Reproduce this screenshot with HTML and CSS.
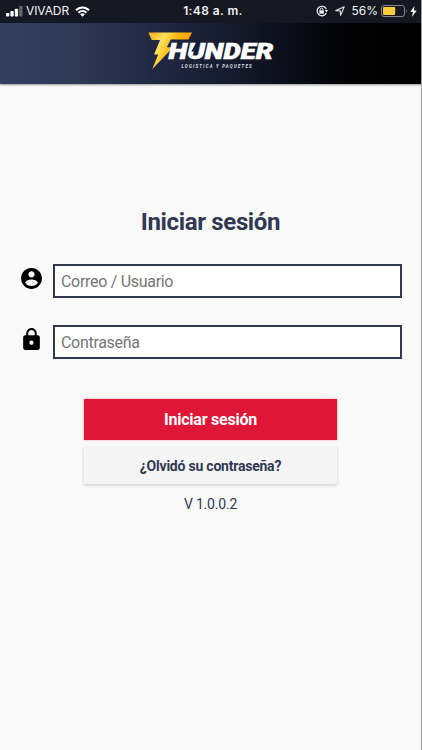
FILE: index.html
```html
<!DOCTYPE html>
<html lang="es">
<head>
<meta charset="utf-8">
<title>Thunder</title>
<link rel="stylesheet" href="styles.css">
</head>
<body>
<div class="screen">
  <div class="status">
    <div class="status-left">
      <svg class="signal" width="17" height="11" viewBox="0 0 17 11" fill="#fff">
        <rect x="0" y="7" width="3.3" height="3.6" rx=".8"/>
        <rect x="4.4" y="5" width="3.3" height="5.6" rx=".8"/>
        <rect x="8.8" y="2.7" width="3.3" height="7.9" rx=".8"/>
        <rect x="13.2" y="0" width="3.3" height="10.6" rx=".8" fill="#686a72"/>
      </svg>
      <span class="carrier">VIVADR</span>
      <svg class="wifi" width="15" height="11" viewBox="0 0 15 11" fill="none" stroke="#fff" stroke-width="2">
        <path d="M1 4.3C4.7.4 10.3.4 14 4.3"/>
        <path d="M3.5 6.8c2.3-2.4 5.7-2.4 8 0"/>
        <path d="M5.2 8.3q2.3-1.9 4.6 0L7.5 10.7z" fill="#fff" stroke="none"/>
      </svg>
    </div>
    <div class="clock">1:48 a. m.</div>
    <div class="status-right">
      <svg width="12" height="12" viewBox="0 0 12 12">
        <path d="M10.300 8A4.800 4.800 0 1 1 10.300 4.100" fill="none" stroke="#f2f2f4" stroke-width="1.200"/>
        <path d="M8.700 5.100h3.300l-1.500 2.500z" fill="#f2f2f4"/>
        <path d="M3.300 5.400h4.600v3.300H3.300z" fill="#f2f2f4"/>
        <path d="M4.300 5.600V4.400a1.300 1.300 0 0 1 2.600 0v1.200" fill="none" stroke="#f2f2f4"/>
      </svg>
      <svg width="10" height="10" viewBox="0 0 10 10">
        <path d="M9.200.8 5.600 9.200 5.200 4.900.8 4.600z" fill="none" stroke="#d6d7da" stroke-width="1.200" stroke-linejoin="round"/>
      </svg>
      <span class="percent">56%</span>
      <svg class="battery" width="27" height="12" viewBox="0 0 27 12">
        <rect x=".5" y=".5" width="23" height="11" rx="2.500" fill="none" stroke="#85878d"/>
        <rect x="2" y="2" width="12.200" height="8" rx="1" fill="#fbcb3c"/>
        <path d="M25 4q1.600 2 0 4z" fill="#85878d"/>
      </svg>
      <svg class="charge" width="7" height="11" viewBox="0 0 7 11"><path d="M4.500 0 .2 6h2.700L2 11l4.700-6.500H3.800z" fill="#fff"/></svg>
    </div>
  </div>
  <header class="header">
    <svg class="logo" width="128" height="41" viewBox="0 0 128 41">
      <defs>
        <linearGradient id="gold" x1="0" y1="0" x2="1" y2=".4">
          <stop offset="0" stop-color="#f5a30b"/>
          <stop offset=".35" stop-color="#ffe05a"/>
          <stop offset=".6" stop-color="#fbb80d"/>
          <stop offset="1" stop-color="#f2960d"/>
        </linearGradient>
      </defs>
      <path d="M.5 3.400H44L40.500 10.600H22.800L18.800 18.300H25.300L4.300 40 10.200 25.400H6.100L12.200 11H4z" fill="url(#gold)"/>
      <path d="M4 11 1.200 4.500 12.700 10.400 7 24.400" fill="none" stroke="#fff099" stroke-width=".6" opacity=".65"/>
      <text class="wordmark" x="20.500" y="30.400" textLength="104.500" lengthAdjust="spacingAndGlyphs">HUNDER</text>
      <path d="M51 14 46.500 21H49.800L44.500 27.500 46 22.500H43.300L48 14z" fill="#171d30"/>
      <text class="tagline" transform="translate(33.500 38.500) scale(.7 1)" textLength="100" lengthAdjust="spacing">LOGISTICA Y PAQUETES</text>
    </svg>
  </header>
  <main class="login">
    <h1 class="title">Iniciar sesión</h1>
    <form class="form">
      <label class="field">
        <svg class="field-icon" width="25" height="25" viewBox="0 0 24 24"><path d="M12 2C6.480 2 2 6.480 2 12s4.480 10 10 10 10-4.480 10-10S17.520 2 12 2zm0 3c1.660 0 3 1.340 3 3s-1.340 3-3 3-3-1.340-3-3 1.340-3 3-3zm0 14.200c-2.500 0-4.710-1.280-6-3.220.030-1.990 4-3.080 6-3.080 1.990 0 5.970 1.090 6 3.080-1.290 1.940-3.500 3.220-6 3.220z"/></svg>
        <input class="input" type="text" placeholder="Correo / Usuario">
      </label>
      <label class="field">
        <svg class="field-icon" width="25" height="25" viewBox="0 0 24 24"><path d="M18 8h-1V6c0-2.760-2.240-5-5-5S7 3.240 7 6v2H6c-1.100 0-2 .9-2 2v10c0 1.100.9 2 2 2h12c1.100 0 2-.9 2-2V10c0-1.100-.9-2-2-2zm-6 9c-1.100 0-2-.9-2-2s.9-2 2-2 2 .9 2 2-.9 2-2 2zm3.100-9H8.900V6c0-1.710 1.390-3.100 3.100-3.100s3.100 1.390 3.100 3.100v2z"/></svg>
        <input class="input" type="password" placeholder="Contraseña">
      </label>
      <button class="button primary" type="button">Iniciar sesión</button>
      <button class="button secondary" type="button">¿Olvidó su contraseña?</button>
    </form>
    <p class="version">V 1.0.0.2</p>
  </main>
</div>
</body>
</html>
```
FILE: styles.css
```css
* { box-sizing: border-box; }

body {
  margin: 0;
  font-family: Roboto, "Liberation Sans", sans-serif;
  background: #f9f9f9;
}

.screen {
  height: 750px;
  display: flex;
  flex-direction: column;
  border-right: 1px solid #9b9b9d;
  overflow: hidden;
}

.status {
  height: 23px;
  flex: none;
  display: grid;
  grid-template-columns: 1fr auto 1fr;
  align-items: center;
  margin-right: -1px;
  padding: 0 5px 1px 6px;
  background: #151721;
  color: #f2f2f4;
  font-family: Inter, "Liberation Sans", sans-serif;
  line-height: 20px;
}

.status-left, .status-right { display: flex; align-items: center; }
.status-right { justify-content: flex-end; }
.carrier { margin-left: 3px; font-size: 12px; letter-spacing: -.1px; }
.wifi { margin-left: 6px; }
.clock { padding-left: 3px; font-size: 12px; font-weight: 600; letter-spacing: .4px; }
.status-right svg + svg { margin-left: 7px; }
.percent { margin: 0 3px 0 6px; font-size: 12px; }
.status-right .battery + .charge { margin-left: 2px; }

.header {
  height: 61px;
  flex: none;
  display: flex;
  justify-content: center;
  padding-top: 6px;
  margin-right: -1px;
  background: linear-gradient(90deg, #343f60 0%, #2e3857 18%, #202740 38%, #151b2d 55%, #0b0e18 68%, #020204 82%, #000 100%);
  box-shadow: 0 1px 2px rgba(0, 0, 0, .4);
}

.logo { margin-left: 2px; }

.wordmark {
  font: italic 900 21.5px Roboto, sans-serif;
  fill: #fff;
  stroke: #fff;
  stroke-width: .6px;
}

.tagline {
  font: italic 700 6px Roboto, sans-serif;
  fill: #e4e6ec;
}

.login {
  display: flex;
  flex-direction: column;
  align-items: center;
  padding: 123px 19px 0 18px;
}

.title {
  margin: 0 0 0 1px;
  color: #303852;
  font-size: 24px;
  line-height: 30px;
  font-weight: 700;
  letter-spacing: -.35px;
}

.form {
  width: 100%;
  display: flex;
  flex-direction: column;
  align-items: center;
  padding-top: 27px;
}

.field {
  width: 100%;
  display: flex;
  align-items: center;
  gap: 9px;
  padding-left: 1px;
  margin-bottom: 27px;
}

.field-icon { flex: none; margin-bottom: 6px; }

.input {
  flex: 1;
  min-width: 0;
  height: 34px;
  padding: 0 6px;
  border: 2px solid #303852;
  border-radius: 0;
  background: #fff;
  font: 16px Roboto, sans-serif;
  letter-spacing: -.3px;
}

.input::placeholder { color: #757575; opacity: 1; }

.button {
  width: 253px;
  margin-left: 1px;
  border: 0;
  padding: 0;
  font-family: Roboto, sans-serif;
  font-weight: 700;
  letter-spacing: -.22px;
}

.primary {
  height: 41px;
  margin-top: 13px;
  background: #e01637;
  color: #fff;
  font-size: 16px;
  box-shadow: 0 0 2px rgba(224, 22, 55, .45);
}

.secondary {
  height: 37px;
  margin-top: 7px;
  background: #f5f5f5;
  color: #303852;
  font-size: 14px;
  box-shadow: 0 1px 3px rgba(0, 0, 0, .2);
}

.version {
  margin: 10px 0 0 1px;
  color: #303852;
  font-size: 14px;
  line-height: 20px;
  letter-spacing: -.2px;
}
```
